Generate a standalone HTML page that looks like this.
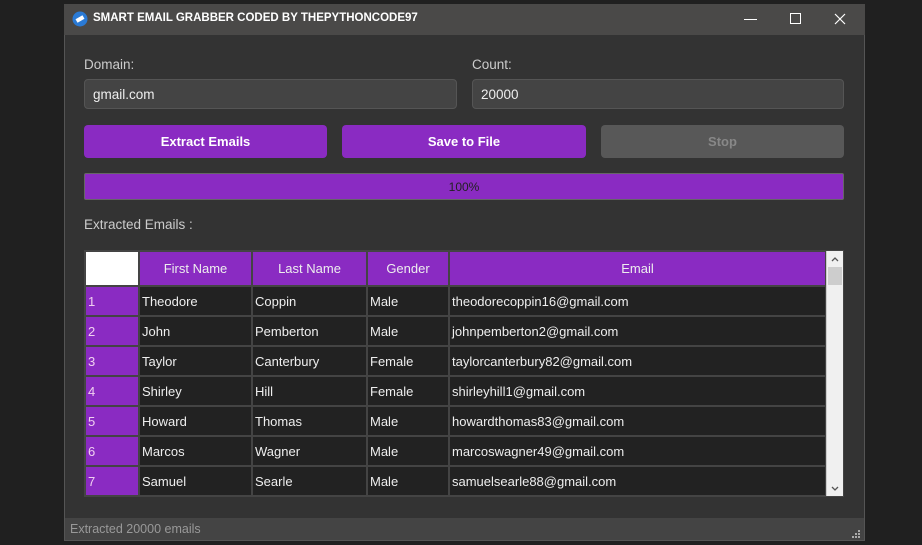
<!DOCTYPE html>
<html><head><style>
*{margin:0;padding:0;box-sizing:border-box}
body{width:922px;height:545px;background:#202020;font-family:"Liberation Sans","DejaVu Sans",sans-serif;position:relative;overflow:hidden;color:#ddd}
.a{position:absolute}
#win{left:64px;top:4px;width:801px;height:537px;background:#333;border:1px solid #555}
#title{left:64px;top:4px;width:801px;height:31px;background:#4a4948}
.lbl{font-size:13.5px;color:#ccc}
.inp{height:30px;background:#444;border:1px solid #555;border-radius:4px;font-size:13.5px;color:#eee;padding:7px 8px}
.btn{height:33px;background:#8a2bc2;border-radius:4px;color:#fff;font-weight:bold;font-size:13px;text-align:center;line-height:33px}
table{border-collapse:collapse;font-size:13px}
td,th{border:2px solid #444;height:30px;padding:0 2px;color:#eee;font-weight:normal}
th{background:#8a2bc2;height:35px;text-align:center}
td{background:#222}
td.n{background:#8a2bc2;color:#f0d0f0}
</style></head><body>
<div id="win" class="a"></div>
<div id="title" class="a"></div>
<svg class="a" style="left:72px;top:11px" width="16" height="16"><circle cx="8" cy="8" r="7.5" fill="#2a7ad5"/><rect x="4" y="6" width="8" height="4" fill="#fff" transform="rotate(-30 8 8)"/></svg>
<div class="a" style="left:93px;top:12px;font-size:11.5px;font-weight:bold;color:#fff">SMART EMAIL GRABBER CODED BY THEPYTHONCODE97</div>
<div class="a" style="left:744px;top:19px;width:13px;height:1px;background:#fff"></div>
<div class="a" style="left:790px;top:13px;width:11px;height:11px;border:1px solid #fff"></div>
<svg class="a" style="left:834px;top:13px" width="12" height="12"><path d="M1 1L11 11M11 1L1 11" stroke="#fff" stroke-width="1.2"/></svg>

<div class="a lbl" style="left:84px;top:57px">Domain:</div>
<div class="a lbl" style="left:472px;top:57px">Count:</div>
<div class="a inp" style="left:84px;top:79px;width:373px">gmail.com</div>
<div class="a inp" style="left:472px;top:79px;width:372px">20000</div>

<div class="a btn" style="left:84px;top:125px;width:243px">Extract Emails</div>
<div class="a btn" style="left:342px;top:125px;width:244px">Save to File</div>
<div class="a btn" style="left:601px;top:125px;width:243px;background:#585858;color:#888">Stop</div>

<div class="a" style="left:84px;top:173px;width:760px;height:27px;background:#8a2bc2;border:1px solid #666;border-radius:2px;text-align:center;font-size:12px;line-height:27px;color:#222">100%</div>

<div class="a lbl" style="left:84px;top:217px">Extracted Emails :</div>

<div class="a" style="left:84px;top:250px;width:760px;height:247px;background:#222;overflow:hidden;border:1px solid #444">
<table style="width:743px;table-layout:fixed;margin:-1px">
<colgroup><col style="width:54px"><col style="width:113px"><col style="width:115px"><col style="width:82px"><col></colgroup>
<tr><th style="background:#fff"></th><th>First Name</th><th>Last Name</th><th>Gender</th><th>Email</th></tr>
<tr><td class="n">1</td><td>Theodore</td><td>Coppin</td><td>Male</td><td>theodorecoppin16@gmail.com</td></tr>
<tr><td class="n">2</td><td>John</td><td>Pemberton</td><td>Male</td><td>johnpemberton2@gmail.com</td></tr>
<tr><td class="n">3</td><td>Taylor</td><td>Canterbury</td><td>Female</td><td>taylorcanterbury82@gmail.com</td></tr>
<tr><td class="n">4</td><td>Shirley</td><td>Hill</td><td>Female</td><td>shirleyhill1@gmail.com</td></tr>
<tr><td class="n">5</td><td>Howard</td><td>Thomas</td><td>Male</td><td>howardthomas83@gmail.com</td></tr>
<tr><td class="n">6</td><td>Marcos</td><td>Wagner</td><td>Male</td><td>marcoswagner49@gmail.com</td></tr>
<tr><td class="n">7</td><td>Samuel</td><td>Searle</td><td>Male</td><td>samuelsearle88@gmail.com</td></tr>
<tr><td class="n">8</td><td></td><td></td><td></td><td></td></tr>
</table>
<div class="a" style="right:0;top:0;width:17px;height:247px;background:#f0f0f0;border-left:1px solid #ccc">
<svg class="a" style="left:4px;top:5px" width="8" height="6"><path d="M1 5L4 2L7 5" stroke="#555" stroke-width="1.3" fill="none"/></svg>
<div class="a" style="left:1px;top:16px;width:14px;height:18px;background:#cdcdcd"></div>
<svg class="a" style="left:4px;top:235px" width="8" height="6"><path d="M1 1L4 4L7 1" stroke="#555" stroke-width="1.3" fill="none"/></svg>
</div>
</div>

<div class="a" style="left:65px;top:518px;width:799px;height:22px;background:#444;font-size:12.5px;color:#999;padding:4px 5px">Extracted 20000 emails</div>
<svg class="a" style="left:852px;top:530px" width="8" height="8"><g fill="#aaa"><rect x="6" y="0" width="2" height="2"/><rect x="3" y="3" width="2" height="2"/><rect x="6" y="3" width="2" height="2"/><rect x="0" y="6" width="2" height="2"/><rect x="3" y="6" width="2" height="2"/><rect x="6" y="6" width="2" height="2"/></g></svg>
</body></html>
